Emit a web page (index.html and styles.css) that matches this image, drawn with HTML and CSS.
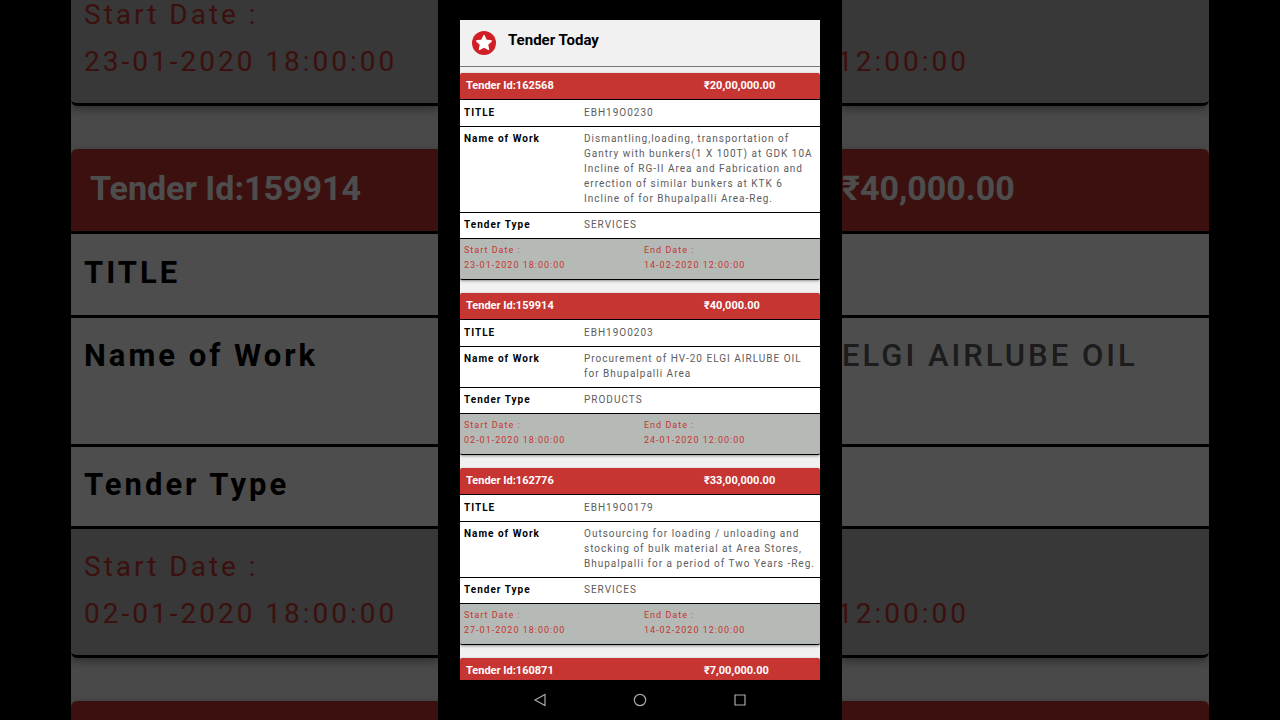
FILE: index.html
```html
<!DOCTYPE html>
<html lang="en">
<head>
    <meta charset="UTF-8">
    <meta name="viewport" content="width=device-width, initial-scale=1.0">
    <title>Tender Today</title>
    <link rel="stylesheet" href="styles.css">
</head>
<body>
    <div class="stage">
        <!-- Dimmed, enlarged list on the left of the phone -->
        <aside class="feed feed-large feed-left" aria-hidden="true">
            <div class="card">
                <div class="dates"><div><p>Start Date :</p><p>23-01-2020 18:00:00</p></div></div>
            </div>
            <div class="card">
                <div class="card-head"><span>Tender Id:159914</span></div>
                <div class="row row-title"><p class="label">TITLE</p></div>
                <div class="row row-tall"><p class="label">Name of Work</p></div>
                <div class="row"><p class="label">Tender Type</p></div>
                <div class="dates"><div><p>Start Date :</p><p>02-01-2020 18:00:00</p></div></div>
            </div>
            <div class="card">
                <div class="card-head card-head-empty"></div>
            </div>
        </aside>

        <div class="phone">
            <main class="screen">
                <header class="app-bar">
                    <svg class="logo" viewBox="0 0 24 24" aria-hidden="true">
                        <circle cx="12" cy="12" r="12" fill="#d01f27"/>
                        <path d="M12 4.6l2.2 4.7 5.1.6-3.8 3.5 1 5.1-4.5-2.5-4.5 2.5 1-5.1-3.8-3.5 5.1-.6z" fill="#fff" stroke="#fff" stroke-width="1.4" stroke-linejoin="round"/>
                    </svg>
                    <h1>Tender Today</h1>
                </header>

                <div class="feed">
                    <article class="card">
                        <h2 class="card-head"><span>Tender Id:162568</span><span class="price">₹20,00,000.00</span></h2>
                        <dl>
                            <div class="row row-title"><dt class="label">TITLE</dt><dd class="value">EBH19O0230</dd></div>
                            <div class="row"><dt class="label">Name of Work</dt><dd class="value">Dismantling,loading, transportation of Gantry with bunkers(1 X 100T) at GDK 10A Incline of RG-II Area and Fabrication and errection of similar bunkers at KTK 6 Incline of for Bhupalpalli Area-Reg.</dd></div>
                            <div class="row"><dt class="label">Tender Type</dt><dd class="value">SERVICES</dd></div>
                        </dl>
                        <dl class="dates">
                            <div><dt>Start Date :</dt><dd>23-01-2020 18:00:00</dd></div>
                            <div><dt>End Date :</dt><dd>14-02-2020 12:00:00</dd></div>
                        </dl>
                    </article>

                    <article class="card">
                        <h2 class="card-head"><span>Tender Id:159914</span><span class="price">₹40,000.00</span></h2>
                        <dl>
                            <div class="row row-title"><dt class="label">TITLE</dt><dd class="value">EBH19O0203</dd></div>
                            <div class="row"><dt class="label">Name of Work</dt><dd class="value">Procurement of HV-20 ELGI AIRLUBE OIL for Bhupalpalli Area</dd></div>
                            <div class="row"><dt class="label">Tender Type</dt><dd class="value">PRODUCTS</dd></div>
                        </dl>
                        <dl class="dates">
                            <div><dt>Start Date :</dt><dd>02-01-2020 18:00:00</dd></div>
                            <div><dt>End Date :</dt><dd>24-01-2020 12:00:00</dd></div>
                        </dl>
                    </article>

                    <article class="card">
                        <h2 class="card-head"><span>Tender Id:162776</span><span class="price">₹33,00,000.00</span></h2>
                        <dl>
                            <div class="row row-title"><dt class="label">TITLE</dt><dd class="value">EBH19O0179</dd></div>
                            <div class="row"><dt class="label">Name of Work</dt><dd class="value">Outsourcing for loading / unloading and stocking of bulk material at Area Stores, Bhupalpalli for a period of Two Years -Reg.</dd></div>
                            <div class="row"><dt class="label">Tender Type</dt><dd class="value">SERVICES</dd></div>
                        </dl>
                        <dl class="dates">
                            <div><dt>Start Date :</dt><dd>27-01-2020 18:00:00</dd></div>
                            <div><dt>End Date :</dt><dd>14-02-2020 12:00:00</dd></div>
                        </dl>
                    </article>

                    <article class="card">
                        <h2 class="card-head"><span>Tender Id:160871</span><span class="price">₹7,00,000.00</span></h2>
                    </article>
                </div>
            </main>

            <nav class="nav-bar">
                <button type="button" aria-label="Back">
                    <svg viewBox="0 0 16 16"><path d="M13 2.5v11L3 8z"/></svg>
                </button>
                <button type="button" aria-label="Home">
                    <svg viewBox="0 0 16 16"><circle cx="8" cy="8" r="5.7"/></svg>
                </button>
                <button type="button" aria-label="Recent apps">
                    <svg viewBox="0 0 16 16"><path d="M3 3h10v10H3z"/></svg>
                </button>
            </nav>
        </div>

        <!-- and the rest of it on the right -->
        <aside class="feed feed-large feed-right" aria-hidden="true">
            <div class="card">
                <div class="dates"><div><p>&nbsp;</p><p>12:00:00</p></div></div>
            </div>
            <div class="card">
                <div class="card-head"><span>₹40,000.00</span></div>
                <div class="row row-title"><p class="value">&nbsp;</p></div>
                <div class="row row-tall"><p class="value">ELGI AIRLUBE OIL</p></div>
                <div class="row"><p class="value">&nbsp;</p></div>
                <div class="dates"><div><p>&nbsp;</p><p>12:00:00</p></div></div>
            </div>
            <div class="card">
                <div class="card-head card-head-empty"></div>
            </div>
        </aside>
    </div>
</body>
</html>
```
FILE: styles.css
```css
* {
    box-sizing: border-box;
}
body {
    margin: 0;
    background: #000;
    font-family: Roboto, sans-serif;
}
h1, h2, p, dl, dd {
    margin: 0;
}
.stage {
    display: grid;
    grid-template-columns: minmax(0, 1fr) 404px minmax(0, 1fr);
    height: 100vh;
    padding: 0 71px;
    overflow: hidden;
}

/* Tender list */
.feed {
    --text: 10px;
    --date-text: 9px;
    --head-text: 11px;
    --line: 15px;
    --spacing: 1px;
    --pad-x: 4px;
    --pad-top: 4px;
    --pad-bottom: 6px;
    --head-pad-x: 6px;
    --head-pad-y: 5px;
    --rule: 1px;
    --gap: 13px;
    --radius: 2px;
    display: flex;
    flex-direction: column;
    gap: var(--gap);
    background: #f1f1f2;
}
.card {
    flex: none;
    border-radius: var(--radius);
    box-shadow: 0 var(--rule) calc(var(--rule) * 3) rgba(0, 0, 0, 0.4);
    font-size: var(--text);
    line-height: var(--line);
    letter-spacing: var(--spacing);
}
.card-head {
    display: grid;
    grid-template-columns: 2fr 1fr;
    padding: var(--head-pad-y) 0 calc(var(--head-pad-y) + var(--rule));
    border-bottom: var(--rule) solid #000;
    border-radius: var(--radius) var(--radius) 0 0;
    background: #c63532;
    color: #fff;
    font-size: var(--head-text);
    font-weight: 700;
    letter-spacing: 0;
}
.card-head span {
    padding-left: var(--head-pad-x);
}
.card-head .price {
    padding-left: var(--pad-x);
}
.row {
    display: grid;
    grid-template-columns: 1fr 2fr;
    border-bottom: var(--rule) solid #000;
    background: #fff;
}
.row-title {
    padding-top: 1px;
}
.label,
.value {
    padding: var(--pad-top) var(--pad-x) var(--pad-bottom);
}
.label {
    color: #000;
    font-weight: 700;
}
.value {
    color: #5c5c5c;
}
.dates {
    display: grid;
    grid-template-columns: 1fr 1fr;
    padding: var(--pad-top) 0 var(--pad-bottom);
    border-bottom: var(--rule) solid #000;
    border-radius: 0 0 var(--radius) var(--radius);
    background: #b5bab6;
    color: #c63532;
    font-size: var(--date-text);
}
.dates div {
    padding-left: var(--pad-x);
}

/* Enlarged list at the sides */
.feed-large {
    --text: 31px;
    --date-text: 28px;
    --head-text: 34px;
    --line: 47px;
    --spacing: 3px;
    --pad-x: 13px;
    --pad-top: 14px;
    --pad-bottom: 18px;
    --head-pad-x: 19px;
    --head-pad-y: 16px;
    --rule: 3px;
    --gap: 43px;
    --radius: 6px;
    overflow: hidden;
    opacity: 0.3;
    white-space: nowrap;
}
.feed-large .card-head,
.feed-large .row,
.feed-large .dates {
    grid-template-columns: 1fr;
}
/* the first card is already scrolled past the top edge */
.feed-large .card:first-child {
    margin-top: -23px;
}
.feed-large .row-title {
    padding-bottom: 1px;
}
.feed-large .row-tall {
    padding-bottom: var(--line);
}
.feed-large .value {
    font-weight: 500;
}
.feed-large .card-head-empty {
    height: 85px;
}
.feed-left .card,
.feed-left .card-head,
.feed-left .dates {
    border-top-right-radius: 0;
    border-bottom-right-radius: 0;
}
.feed-right {
    --pad-x: 0px;
    --head-pad-x: 0px;
}
.feed-right .card,
.feed-right .card-head,
.feed-right .dates {
    border-top-left-radius: 0;
    border-bottom-left-radius: 0;
}
/* the dates run in from behind the phone */
.feed-right .dates div {
    margin-left: -5px;
}

/* Phone */
.phone {
    display: flex;
    flex-direction: column;
    min-height: 0;
    padding: 20px 22px 0;
    background: #000;
}
.screen {
    flex: 1;
    min-height: 0;
    overflow: hidden;
    background: #f1f1f2;
}
.app-bar {
    display: flex;
    align-items: flex-start;
    gap: 12px;
    margin-bottom: 6px;
    padding: 11px 12px;
    border-bottom: 1px solid #777;
}
.logo {
    width: 24px;
    height: 24px;
}
.app-bar h1 {
    color: #000;
    font-size: 15px;
    font-weight: 700;
    line-height: 19px;
}
.nav-bar {
    display: flex;
    flex: none;
    align-items: center;
    justify-content: center;
    gap: 84px;
    height: 40px;
}
.nav-bar button {
    width: 16px;
    height: 16px;
    padding: 0;
    border: 0;
    background: none;
    cursor: pointer;
}
.nav-bar svg {
    display: block;
    fill: none;
    stroke: #aaa;
    stroke-width: 1.2;
}
```
